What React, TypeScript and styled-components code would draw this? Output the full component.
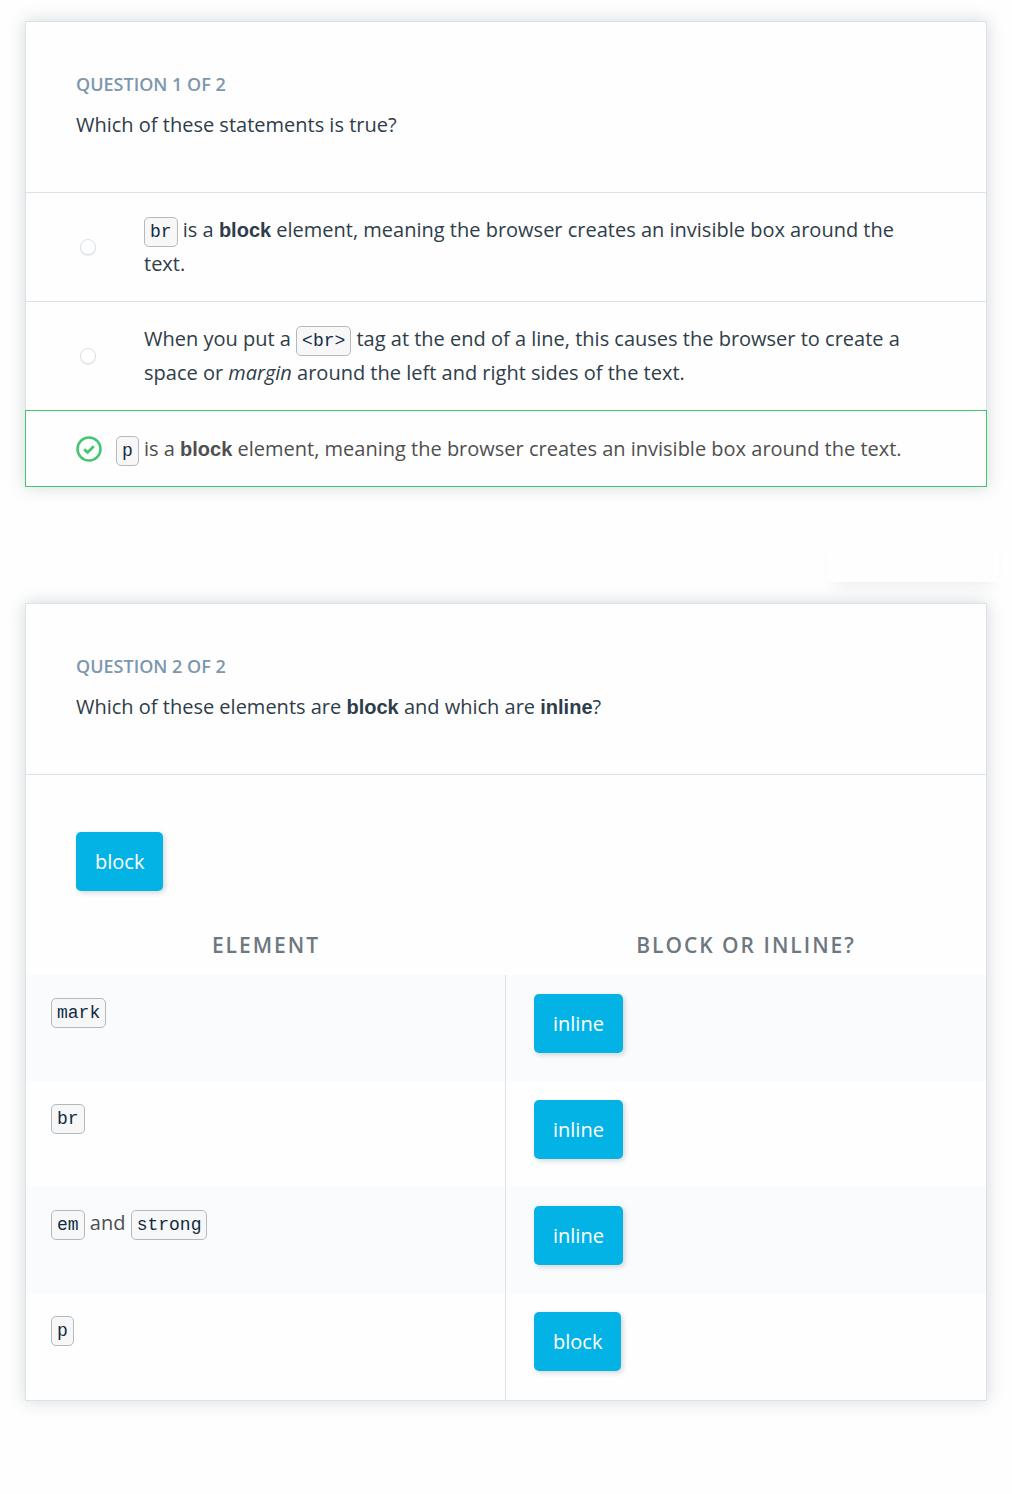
import React from 'react';
import styled, { createGlobalStyle } from 'styled-components';

const GlobalStyle = createGlobalStyle`
  *, *::before, *::after { box-sizing: border-box; }
  body {
    margin: 0;
    background: #fefefe;
    color: #2e3d49;
    font-family: 'Open Sans', sans-serif;
    font-size: 20px;
    line-height: 34px;
  }
`;

const Page = styled.main`
  padding: 21px 25px 92px;
`;

const Card = styled.section`
  background: #fefefe;
  border: 1px solid #dbe2e8;
  box-shadow: 0 0 16px rgba(46, 61, 73, 0.2);
`;

const CardHeader = styled.header`
  padding: 50px;
`;

const Counter = styled.h2`
  margin: 0 0 12px;
  color: #7d97ad;
  font-size: 18px;
  font-weight: 600;
  line-height: 24px;
  text-transform: uppercase;
`;

const Prompt = styled.p`
  margin: 0;
`;

const Strong = styled.strong`
  font-family: 'Liberation Sans', Arial, sans-serif;
  font-weight: 700;
`;

const Code = styled.code`
  padding: 4px 5px;
  border: 1px solid #b4b9bd;
  border-radius: 5px;
  background: #f7f7f8;
  color: #0f2b46;
  font-family: 'Liberation Mono', monospace;
  font-size: 18px;
  line-height: 1;
`;

const Options = styled.div`
  display: flex;
  flex-direction: column;
`;

const Option = styled.label`
  display: flex;
  align-items: center;
  gap: 48px;
  padding: 20px 50px 20px 54px;
  border-top: 1px solid #dbe2e8;
`;

const CorrectOption = styled(Option)`
  gap: 14px;
  margin: 0 -1px -1px;
  padding: 21px 50px 20px;
  border: 1px solid #43c66e;
  color: #4f4f4f;
`;

const Radio = styled.input`
  appearance: none;
  flex: none;
  width: 16px;
  height: 16px;
  margin: 0;
  border: 1px solid #dbe2e8;
  border-radius: 50%;
  background: #fff;
  box-shadow: 0 1px 1px rgba(46, 61, 73, 0.1);
`;

const CheckMark = styled.span`
  position: relative;
  flex: none;
  width: 26px;
  height: 26px;

  svg { display: block; }

  input {
    position: absolute;
    inset: 0;
    margin: 0;
    opacity: 0;
  }
`;

const Actions = styled.div`
  display: flex;
  justify-content: flex-end;
  height: 116px;
  margin-right: -12px;
  padding: 38px 0 21px;
`;

const ActionSlot = styled.div`
  width: 172px;
  background: #fefefe;
  box-shadow: 0 12px 16px -8px rgba(0, 0, 0, 0.07);
`;

const Bank = styled.div`
  padding: 57px 50px 37px;
  border-top: 1px solid #dbe2e8;
`;

const Chip = styled.button`
  display: block;
  height: 59px;
  padding: 0 19px;
  border: 0;
  border-radius: 5px;
  background: #04b3e6;
  color: #fff;
  box-shadow: 2px 2px 5px rgba(46, 61, 73, 0.2);
  font: inherit;
  cursor: grab;
`;

const MatchTable = styled.table`
  width: 100%;
  table-layout: fixed;
  border-collapse: separate;
  border-spacing: 0;
  color: #4f4f4f;
`;

const HeadCell = styled.th`
  padding: 0 0 13px;
  color: #6d7880;
  font-size: 21px;
  font-weight: 600;
  letter-spacing: 2px;
  text-align: center;
  text-transform: uppercase;
`;

const Row = styled.tr`
  height: 106px;

  &:nth-child(odd) { background: #fafbfd; }
  &:last-child { height: 107px; }
`;

const ElementCell = styled.td`
  padding: 19px 25px;
  border-right: 1px solid #dbe2e8;
  vertical-align: top;
`;

const AnswerCell = styled.td`
  padding: 19px 28px;
  vertical-align: top;
`;

const rows = [
  { element: <Code>mark</Code>, answer: 'inline' },
  { element: <Code>br</Code>, answer: 'inline' },
  { element: <><Code>em</Code> and <Code>strong</Code></>, answer: 'inline' },
  { element: <Code>p</Code>, answer: 'block' },
];

export default function App() {
  return (
    <>
      <GlobalStyle />
      <Page>
        <Card>
          <CardHeader>
            <Counter>Question 1 of 2</Counter>
            <Prompt>Which of these statements is true?</Prompt>
          </CardHeader>
          <Options role="radiogroup">
            <Option>
              <Radio type="radio" name="statement" />
              <span>
                <Code>br</Code> is a <Strong>block</Strong> element, meaning the browser creates an invisible box around the text.
              </span>
            </Option>
            <Option>
              <Radio type="radio" name="statement" />
              <span>
                When you put a <Code>&lt;br&gt;</Code> tag at the end of a line, this causes the browser to create a space or <em>margin</em> around the left and right sides of the text.
              </span>
            </Option>
            <CorrectOption>
              <CheckMark>
                <svg width="26" height="26" viewBox="0 0 26 26" fill="none" stroke="#43c66e" strokeWidth="2.5" aria-hidden="true">
                  <circle cx="13" cy="13" r="11.5" />
                  <path d="M8.2 13.4l3.4 3 6.2-6.2" strokeWidth="2.8" />
                </svg>
                <input type="radio" name="statement" defaultChecked />
              </CheckMark>
              <span>
                <Code>p</Code> is a <Strong>block</Strong> element, meaning the browser creates an invisible box around the text.
              </span>
            </CorrectOption>
          </Options>
        </Card>

        <Actions>
          <ActionSlot />
        </Actions>

        <Card>
          <CardHeader>
            <Counter>Question 2 of 2</Counter>
            <Prompt>
              Which of these elements are <Strong>block</Strong> and which are <Strong>inline</Strong>?
            </Prompt>
          </CardHeader>
          <Bank>
            <Chip type="button">block</Chip>
          </Bank>
          <MatchTable>
            <thead>
              <tr>
                <HeadCell scope="col">Element</HeadCell>
                <HeadCell scope="col">Block or inline?</HeadCell>
              </tr>
            </thead>
            <tbody>
              {rows.map((row, index) => (
                <Row key={index}>
                  <ElementCell>{row.element}</ElementCell>
                  <AnswerCell>
                    <Chip type="button">{row.answer}</Chip>
                  </AnswerCell>
                </Row>
              ))}
            </tbody>
          </MatchTable>
        </Card>
      </Page>
    </>
  );
}
